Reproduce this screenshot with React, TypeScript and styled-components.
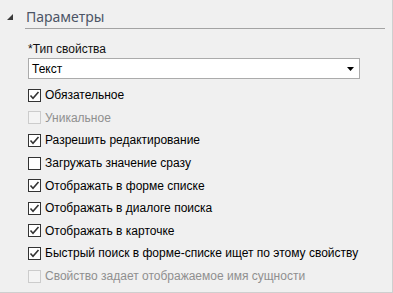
import React from "react";
import styled, { createGlobalStyle } from "styled-components";

const Global = createGlobalStyle`
  html, body { margin: 0; padding: 0; background: #f0f0f0; }
  body { font-family: "Liberation Sans", Arial, sans-serif; }
`;

const Panel = styled.div`
  box-sizing: border-box;
  width: 393px;
  height: 293px;
  background: #f0f0f0;
  border-right: 1px solid #cfcfcf;
  border-bottom: 1px solid #cfcfcf;
  overflow: hidden;
`;

const Header = styled.div`
  display: flex;
  align-items: flex-end;
  padding: 8px 7px 0 7px;
`;

const Toggle = styled.svg`
  width: 6px;
  height: 6px;
  margin-bottom: 9px;
  flex: none;
`;

const Title = styled.div`
  flex: 1;
  margin-left: 12px;
  padding-left: 1px;
  height: 20px;
  line-height: 18px;
  font-family: "Noto Sans", sans-serif;
  font-size: 14px;
  color: #4c5566;
  border-bottom: 1px solid #a3a3a3;
`;

const Body = styled.div`
  padding: 12px 32px 0 28px;
`;

const FieldLabel = styled.div`
  font-size: 12px;
  line-height: 16px;
  color: #111;
  margin-bottom: 1px;
`;

const Select = styled.div`
  box-sizing: border-box;
  height: 21px;
  border: 1px solid #ababab;
  background: #fff;
  display: flex;
  align-items: center;
  justify-content: space-between;
  padding: 0 5px 0 3px;
  font-size: 12px;
  color: #000;
  margin-bottom: 5px;
`;

const Arrow = styled.svg`
  width: 7px;
  height: 4px;
`;

const List = styled.div`
  display: flex;
  flex-direction: column;
`;

const Row = styled.div<{ $disabled?: boolean }>`
  height: 22.6px;
  display: flex;
  align-items: center;
  gap: 4px;
  font-size: 12px;
  white-space: nowrap;
  color: ${(p) => (p.$disabled ? "#8f8f8f" : "#000")};
`;

const Box = styled.div<{ $disabled?: boolean }>`
  box-sizing: border-box;
  width: 13px;
  height: 13px;
  flex: none;
  border: 1px solid ${(p) => (p.$disabled ? "#cccccc" : "#333333")};
  background: ${(p) => (p.$disabled ? "#f4f4f4" : "#ffffff")};
  display: flex;
  align-items: center;
  justify-content: center;
`;

const items: { label: string; checked: boolean; disabled?: boolean }[] = [
  { label: "Обязательное", checked: true },
  { label: "Уникальное", checked: false, disabled: true },
  { label: "Разрешить редактирование", checked: true },
  { label: "Загружать значение сразу", checked: false },
  { label: "Отображать в форме списке", checked: true },
  { label: "Отображать в диалоге поиска", checked: true },
  { label: "Отображать в карточке", checked: true },
  { label: "Быстрый поиск в форме-списке ищет по этому свойству", checked: true },
  { label: "Свойство задает отображаемое имя сущности", checked: false, disabled: true },
];

const Check = () => (
  <svg width="11" height="11" viewBox="0 0 11 11">
    <path d="M1.5 5.5 L4 8.2 L9.5 2" fill="none" stroke="#333" strokeWidth="1.6" />
  </svg>
);

export default function App() {
  return (
    <>
      <Global />
      <Panel>
        <Header>
          <Toggle viewBox="0 0 6 6">
            <polygon points="6,0 6,6 0,6" fill="#3a3a3a" />
          </Toggle>
          <Title>Параметры</Title>
        </Header>
        <Body>
          <FieldLabel>*Тип свойства</FieldLabel>
          <Select>
            <span>Текст</span>
            <Arrow viewBox="0 0 7 4">
              <polygon points="0,0 7,0 3.5,4" fill="#000" />
            </Arrow>
          </Select>
          <List>
            {items.map((it) => (
              <Row key={it.label} $disabled={it.disabled}>
                <Box $disabled={it.disabled}>{it.checked && <Check />}</Box>
                <span>{it.label}</span>
              </Row>
            ))}
          </List>
        </Body>
      </Panel>
    </>
  );
}
